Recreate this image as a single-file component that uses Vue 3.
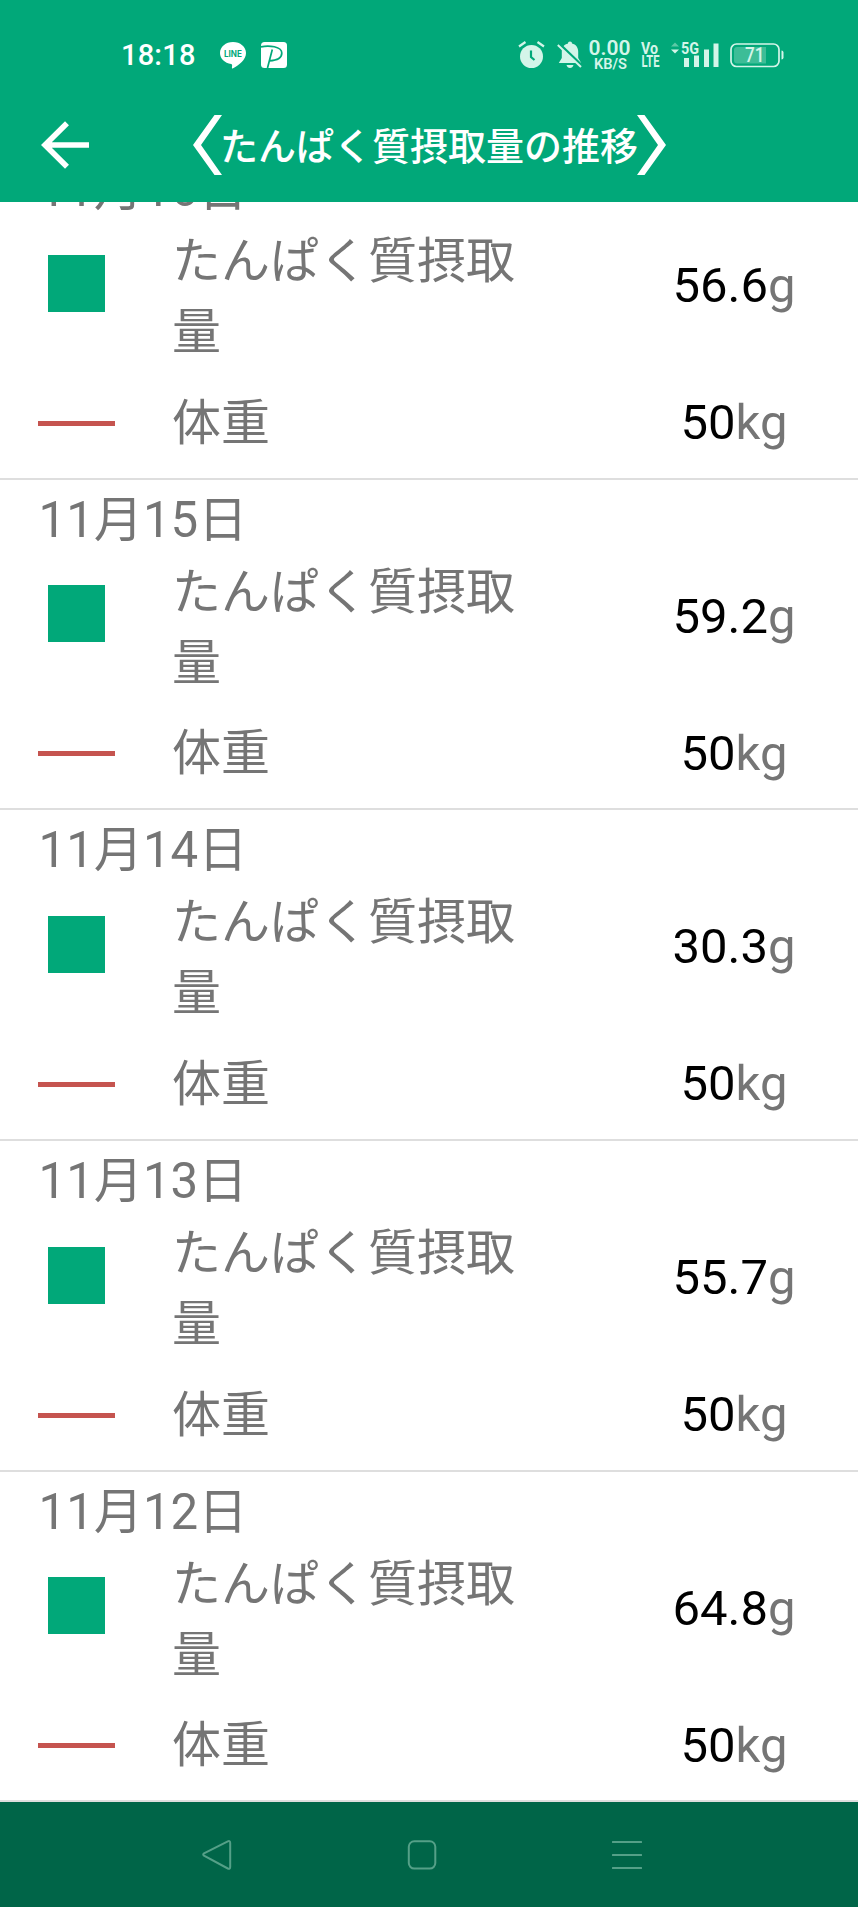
<template>
  <div class="screen">
    <header class="header">
      <div class="status-bar">
        <span class="clock">18:18</span>
        <svg class="icon-line" width="26" height="27" viewBox="0 0 26 27">
          <path d="M13 0C5.800 0 0 4.900 0 11c0 5.500 4.700 10 11.200 11 1.300.4 1 1.500.7 3.600-.1.8.4 1.200 1.200.7C19 23 26 17.900 26 11 26 4.900 20.200 0 13 0z" fill="#fff" />
          <text x="4" y="14.500" textLength="18" lengthAdjust="spacingAndGlyphs" class="line-text">LINE</text>
        </svg>
        <svg class="icon-pay" width="26" height="26" viewBox="0 0 26 26">
          <rect width="26" height="26" rx="3.500" fill="#fff" />
          <path d="M0 4.800C8 3 20.800 4.500 20.800 11c0 5.500-6 7.500-12.300 7.800M11.300 7.500L6.500 26" fill="none" stroke="#01a879" stroke-width="1.700" />
        </svg>
        <svg class="icon-alarm" width="27" height="28" viewBox="0 0 27 28">
          <circle cx="13.500" cy="15.500" r="11.500" fill="#d4f5e9" />
          <path d="M1 5.500L7.500 1M19.500 1L26 5.500" stroke="#d4f5e9" stroke-width="2.200" fill="none" />
          <path d="M13 9.500v6.500l3.500 3" stroke="#01a879" stroke-width="2.200" fill="none" />
        </svg>
        <svg class="icon-bell" width="26" height="28" viewBox="0 0 26 28">
          <path d="M13 0.500c1.300 0 2 .9 2 2 3.900.9 6.200 4 6.200 8v6.500l3 5H1.800l3-5v-6.500c0-4 2.300-7.100 6.200-8 0-1.100.7-2 2-2zM9.500 24h7c-.5 2-1.800 3-3.500 3s-3-1-3.500-3z" fill="#d4f5e9" />
          <path d="M2.300 3.200L26 25.800" stroke="#01a879" stroke-width="3" />
          <path d="M.8 4L24 26" stroke="#d4f5e9" stroke-width="2" />
        </svg>
        <svg class="net-speed" width="44" height="30" viewBox="0 0 44 30">
          <text x="0.500" y="15.300" textLength="42" lengthAdjust="spacingAndGlyphs" class="speed-value">0.00</text>
          <text x="6" y="28.700" textLength="33" lengthAdjust="spacingAndGlyphs" class="speed-unit">KB/S</text>
        </svg>
        <svg class="volte" width="19" height="28" viewBox="0 0 19 28">
          <text x="0" y="12.500" textLength="17" lengthAdjust="spacingAndGlyphs" class="volte-text">Vo</text>
          <text x="0.500" y="25.800" textLength="18" lengthAdjust="spacingAndGlyphs" class="volte-text">LTE</text>
        </svg>
        <svg class="signal" width="48" height="28" viewBox="0 0 48 28">
          <path d="M0 5.500L4 1.500l4 4z" fill="#5cc9a6" />
          <path d="M0 8.500h8l-4 4z" fill="#d4f5e9" />
          <text x="10" y="12.500" textLength="18" lengthAdjust="spacingAndGlyphs" class="signal-text">5G</text>
          <path d="M13 17h5v9h-5zM23 14.500h5V26h-5zM33 8.500h5V26h-5zM42.500 2.500h5V26h-5z" fill="#d4f5e9" />
        </svg>
        <svg class="battery" width="54" height="25" viewBox="0 0 54 25">
          <rect x="1" y="1" width="48" height="22.500" rx="5.500" fill="none" stroke="#d4f5e9" stroke-width="1.700" />
          <path d="M7 4h29v16.500H7a3 3 0 0 1-3-3V7a3 3 0 0 1 3-3z" fill="#3dbd97" />
          <path d="M51.500 7.500q2 0 2 2v5q0 2-2 2z" fill="#d4f5e9" />
          <text x="15" y="19.200" textLength="19.500" lengthAdjust="spacingAndGlyphs" class="battery-text">71</text>
        </svg>
      </div>
      <div class="toolbar">
        <svg class="back" width="48" height="48" viewBox="0 0 48 48">
          <path d="M26 2.300L4 24l22 21.700M4 24h44" fill="none" stroke="#fff" stroke-width="5.600" />
        </svg>
        <div class="title">
          <svg width="29" height="60" viewBox="0 0 29 60">
            <path d="M21.500 0H29L8 30l21 30h-7.500L0 30z" fill="#fff" />
          </svg>
          <h1>たんぱく質摂取量の推移</h1>
          <svg width="29" height="60" viewBox="0 0 29 60">
            <path d="M7.500 0H0l21 30L0 60h7.500L29 30z" fill="#fff" />
          </svg>
        </div>
      </div>
    </header>

    <main class="list">
      <section v-for="item in records" :key="item.date" class="record">
        <div class="date">{{ item.date }}</div>
        <div class="row protein">
          <div class="mark"><span class="square"></span></div>
          <div class="label">たんぱく質摂取量</div>
          <div class="value">{{ item.protein }}<span class="unit">g</span></div>
        </div>
        <div class="row weight">
          <div class="mark"><span class="dash"></span></div>
          <div class="label">体重</div>
          <div class="value">{{ item.weight }}<span class="unit">kg</span></div>
        </div>
      </section>
    </main>

    <nav class="nav-bar">
      <svg width="30" height="30" viewBox="0 0 30 30">
        <path d="M25.800 1.400L2 13.400q-1.600 1.100 0 2.300l23.800 12.800q2.400 1 2.400-1.500V2.900q0-2.500-2.400-1.500z" />
      </svg>
      <svg width="30" height="30" viewBox="0 0 30 30">
        <rect x="1.800" y="1.300" width="26.500" height="27.300" rx="5.500" />
      </svg>
      <svg width="30" height="30" viewBox="0 0 30 30">
        <path d="M.8 2h28.400M.8 15h28.400M.8 28h28.400" />
      </svg>
    </nav>
  </div>
</template>

<script setup>
import { ref } from 'vue';

const records = ref([
  { date: '11月16日', protein: '56.6', weight: 50 },
  { date: '11月15日', protein: '59.2', weight: 50 },
  { date: '11月14日', protein: '30.3', weight: 50 },
  { date: '11月13日', protein: '55.7', weight: 50 },
  { date: '11月12日', protein: '64.8', weight: 50 }
]);
</script>

<style>
body {
  margin: 0;
  background: #fff;
}
</style>

<style scoped>
.screen {
  width: 858px;
  height: 1907px;
  display: flex;
  flex-direction: column;
  overflow: hidden;
  background: #fff;
  font-family: Roboto, "Noto Sans CJK JP", sans-serif;
}

.header {
  height: 202px;
  flex: none;
  position: relative;
  z-index: 1;
  background: #01a879;
  color: #fff;
}

.status-bar {
  height: 110px;
  display: flex;
  align-items: center;
  box-sizing: border-box;
  padding-left: 121px;
}

.status-bar svg {
  flex: none;
  overflow: visible;
}

.clock {
  width: 99px;
  font-size: 29px;
  font-weight: 500;
  line-height: 34px;
  letter-spacing: 0.2px;
}

.icon-pay {
  margin-left: 15px;
}

.icon-alarm {
  margin-left: 231px;
}

.icon-bell {
  margin-left: 12px;
}

.net-speed {
  margin-left: 5px;
}

.volte {
  margin-left: 9px;
}

.signal {
  margin-left: 11px;
}

.battery {
  margin-left: 11px;
}

.line-text {
  font: 700 8.5px Inter, sans-serif;
  fill: #01a879;
}

.speed-value {
  font: 600 20px Roboto, sans-serif;
  fill: #d4f5e9;
}

.speed-unit {
  font: 600 15.5px Roboto, sans-serif;
  fill: #d4f5e9;
}

.volte-text {
  font: 700 16px Roboto, sans-serif;
  fill: #d4f5e9;
}

.signal-text {
  font: 700 16.5px Roboto, sans-serif;
  fill: #d4f5e9;
}

.battery-text {
  font: 500 20px Roboto, sans-serif;
  fill: #d4f5e9;
}

.toolbar {
  height: 70px;
  display: flex;
  align-items: center;
  padding-left: 41px;
}

.title {
  display: flex;
  align-items: center;
  margin-left: 104px;
}

.title h1 {
  width: 417px;
  margin: 0 0 3px -2px;
  font-family: "Noto Sans CJK JP", sans-serif;
  font-size: 38px;
  font-weight: 500;
  line-height: 60px;
  white-space: nowrap;
}

.list {
  flex: 1;
  min-height: 0;
  overflow: hidden;
}

.record {
  height: 330.7px;
  box-sizing: border-box;
  border-bottom: 2px solid #dedede;
  color: #757575;
  font-size: 49px;
}

/* list is scrolled: the first date is tucked under the header */
.record:first-child {
  margin-top: -53px;
}

.date {
  height: 77px;
  padding-left: 38.5px;
  font-size: 49.2px;
  line-height: 81px;
}

.row {
  display: grid;
  grid-template-columns: 172px 438px 248px;
  align-items: center;
}

.protein {
  height: 144px;
}

.weight {
  height: 106px;
}

.label {
  width: 350px;
  line-height: 71px;
  word-break: break-all;
}

.value {
  color: #000;
  text-align: center;
  line-height: 72px;
}

.unit {
  color: #757575;
}

.mark {
  width: 153px;
  display: flex;
  justify-content: center;
}

.protein .mark {
  padding-bottom: 31px;
}

.protein .label {
  padding-bottom: 3px;
}

.protein .value {
  padding-bottom: 25px;
}

.square {
  width: 57px;
  height: 57px;
  background: #01a879;
}

.dash {
  width: 77px;
  height: 5px;
  background: #c5544f;
}

.nav-bar {
  height: 105px;
  flex: none;
  box-sizing: border-box;
  padding: 0 216px 0 202px;
  display: flex;
  align-items: center;
  justify-content: space-between;
  background: #006548;
}

.nav-bar svg {
  fill: none;
  stroke: #55a088;
  stroke-width: 2;
  stroke-linecap: round;
}
</style>
